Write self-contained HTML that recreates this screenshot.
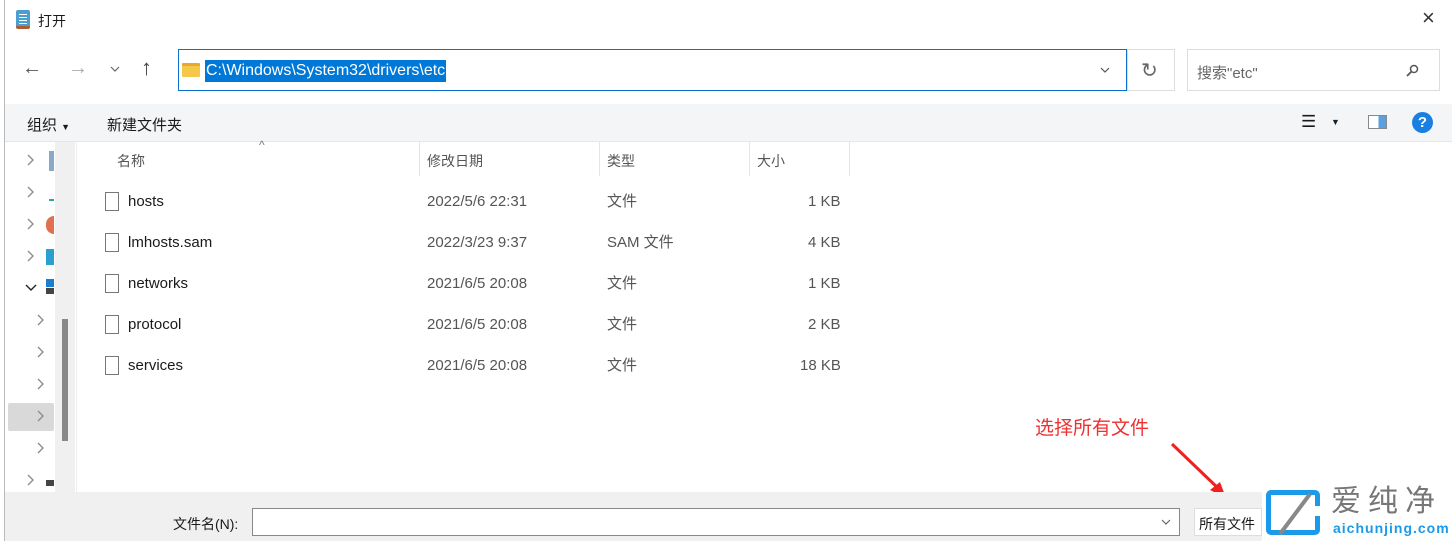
<!DOCTYPE html>
<html><head><meta charset="utf-8"><style>
*{margin:0;padding:0;box-sizing:border-box}
body{width:1452px;height:541px;overflow:hidden;background:#fff;font-family:"Liberation Sans","Noto Sans CJK SC",sans-serif;font-size:14px;color:#1a1a1a;position:relative}
.a{position:absolute}
.row span{position:absolute;font-size:15px;top:0;line-height:20px;height:20px}
.chev{width:8px;height:12px}
</style></head><body>
<div class="a" style="left:4px;top:0;width:1px;height:541px;background:#bbb"></div>
<!-- title -->
<div class="a" style="left:16px;top:10px;width:14px;height:19px;background:#4a9fd0;border-radius:2px;border-bottom:3px solid #b05a30"></div>
<div class="a" style="left:19px;top:14px;width:8px;height:1px;background:#fff;box-shadow:0 3px #fff,0 6px #fff,0 9px #fff"></div>
<div class="a" style="left:38px;top:11px;font-size:14px">打开</div>
<div class="a" style="left:1422px;top:5px;font-size:22px;color:#333">×</div>
<!-- nav -->
<div class="a" style="left:22px;top:57px;font-size:20px;color:#555">←</div>
<div class="a" style="left:68px;top:57px;font-size:20px;color:#aaa">→</div>
<svg class="a" style="left:110px;top:66px" width="10" height="6"><polyline points="1,1 5,5 9,1" fill="none" stroke="#666" stroke-width="1.2"/></svg>
<div class="a" style="left:141px;top:55px;font-size:22px;color:#444">↑</div>
<div class="a" style="left:178px;top:49px;width:949px;height:42px;border:1px solid #0a6fd0"></div>
<div class="a" style="left:182px;top:63px;width:18px;height:14px;background:#f5c84c;border-top:3px solid #e8a82a;border-radius:1px"></div>
<div class="a" style="left:205px;top:60px;height:22px;line-height:22px;background:#0078d7;color:#fff;font-size:16px;padding:0 1px">C:\Windows\System32\drivers\etc</div>
<svg class="a" style="left:1100px;top:67px" width="10" height="6"><polyline points="1,1 5,5 9,1" fill="none" stroke="#555" stroke-width="1.2"/></svg>
<div class="a" style="left:1127px;top:49px;width:48px;height:42px;border:1px solid #ddd"></div>
<div class="a" style="left:1141px;top:58px;font-size:20px;color:#666">↻</div>
<div class="a" style="left:1187px;top:49px;width:253px;height:42px;border:1px solid #ddd"></div>
<div class="a" style="left:1197px;top:62px;font-size:15px;color:#666">搜索"etc"</div>
<svg class="a" style="left:1405px;top:64px" width="14" height="14"><circle cx="9" cy="5" r="3.5" fill="none" stroke="#555" stroke-width="1.5"/><line x1="6.5" y1="7.5" x2="2" y2="12" stroke="#555" stroke-width="1.8"/></svg>
<!-- toolbar -->
<div class="a" style="left:5px;top:104px;width:1447px;height:38px;background:#f4f5f6;border-bottom:1px solid #e6e6e6"></div>
<div class="a" style="left:27px;top:114px;font-size:15px">组织 <span style="font-size:9px">▼</span></div>
<div class="a" style="left:107px;top:114px;font-size:15px">新建文件夹</div>
<div class="a" style="left:1301px;top:112px;font-size:17px">☰</div>
<div class="a" style="left:1331px;top:117px;font-size:9px;color:#123">▼</div>
<div class="a" style="left:1368px;top:115px;width:19px;height:14px;border:1px solid #888;background:linear-gradient(90deg,#fff 55%,#5aa0e0 55%)"></div>
<div class="a" style="left:1412px;top:112px;width:21px;height:21px;border-radius:50%;background:#1a7fe0;color:#fff;text-align:center;font-size:15px;line-height:21px;font-weight:bold">?</div>
<!-- nav pane -->
<div class="a" style="left:55px;top:142px;width:20px;height:350px;background:#f0f0f0"></div>
<div class="a" style="left:62px;top:319px;width:6px;height:122px;background:#888"></div>
<div class="a" style="left:8px;top:403px;width:46px;height:28px;background:#d9d9d9;border-radius:2px"></div>
<svg class="a" style="left:0;top:142px" width="55" height="350">
<g fill="none" stroke="#888" stroke-width="1.3">
<polyline points="28,13 33,18 28,23"/><polyline points="28,45 33,50 28,55"/><polyline points="28,77 33,82 28,87"/><polyline points="28,109 33,114 28,119"/>
<polyline points="38,173 43,178 38,183"/><polyline points="38,205 43,210 38,215"/><polyline points="38,237 43,242 38,247"/><polyline points="38,269 43,274 38,279"/><polyline points="38,301 43,306 38,311"/><polyline points="28,333 33,338 28,343"/>
</g><polyline points="26,143 31,148 36,143" fill="none" stroke="#222" stroke-width="1.4"/></svg>
<div class="a" style="left:49px;top:151px;width:5px;height:20px;background:#8aa8c8"></div>
<div class="a" style="left:49px;top:189px;width:5px;height:12px;border-bottom:2px solid #2a9"></div>
<div class="a" style="left:46px;top:216px;width:8px;height:18px;background:#e07050;border-radius:9px 0 0 9px"></div>
<div class="a" style="left:46px;top:249px;width:8px;height:16px;background:#2aa0d0"></div>
<div class="a" style="left:46px;top:279px;width:8px;height:8px;background:#1a7fd0"></div>
<div class="a" style="left:46px;top:288px;width:8px;height:6px;background:#444"></div>
<div class="a" style="left:46px;top:480px;width:8px;height:6px;background:#444"></div>
<div class="a" style="left:76px;top:142px;width:1px;height:350px;background:#eee"></div>
<!-- headers -->
<div class="a" style="left:117px;top:151px;font-size:14px;color:#555">名称</div>
<div class="a" style="left:259px;top:138px;font-size:12px;color:#777">^</div>
<div class="a" style="left:419px;top:142px;width:1px;height:34px;background:#e5e5e5"></div>
<div class="a" style="left:427px;top:151px;font-size:14px;color:#555">修改日期</div>
<div class="a" style="left:599px;top:142px;width:1px;height:34px;background:#e5e5e5"></div>
<div class="a" style="left:607px;top:151px;font-size:14px;color:#555">类型</div>
<div class="a" style="left:749px;top:142px;width:1px;height:34px;background:#e5e5e5"></div>
<div class="a" style="left:757px;top:151px;font-size:14px;color:#555">大小</div>
<div class="a" style="left:849px;top:142px;width:1px;height:34px;background:#e5e5e5"></div>
<!-- rows -->
<div class="a row" style="left:0;top:192px;width:900px">
<span style="left:105px;width:14px;height:19px;border:1px solid #777;background:#fff"></span><span style="left:128px">hosts</span><span style="left:427px;color:#555">2022/5/6 22:31</span><span style="left:607px;color:#555">文件</span><span style="left:808px;color:#555">1 KB</span></div>
<div class="a row" style="left:0;top:233px;width:900px">
<span style="left:105px;width:14px;height:19px;border:1px solid #777;background:#fff"></span><span style="left:128px">lmhosts.sam</span><span style="left:427px;color:#555">2022/3/23 9:37</span><span style="left:607px;color:#555">SAM 文件</span><span style="left:808px;color:#555">4 KB</span></div>
<div class="a row" style="left:0;top:274px;width:900px">
<span style="left:105px;width:14px;height:19px;border:1px solid #777;background:#fff"></span><span style="left:128px">networks</span><span style="left:427px;color:#555">2021/6/5 20:08</span><span style="left:607px;color:#555">文件</span><span style="left:808px;color:#555">1 KB</span></div>
<div class="a row" style="left:0;top:315px;width:900px">
<span style="left:105px;width:14px;height:19px;border:1px solid #777;background:#fff"></span><span style="left:128px">protocol</span><span style="left:427px;color:#555">2021/6/5 20:08</span><span style="left:607px;color:#555">文件</span><span style="left:808px;color:#555">2 KB</span></div>
<div class="a row" style="left:0;top:356px;width:900px">
<span style="left:105px;width:14px;height:19px;border:1px solid #777;background:#fff"></span><span style="left:128px">services</span><span style="left:427px;color:#555">2021/6/5 20:08</span><span style="left:607px;color:#555">文件</span><span style="left:800px;color:#555">18 KB</span></div>
<div class="a" style="left:1035px;top:413px;font-size:19px;color:#f03030">选择所有文件</div>
<svg class="a" style="left:1168px;top:440px" width="64" height="62"><line x1="4" y1="4" x2="52" y2="50" stroke="#f02020" stroke-width="3"/><polygon points="58,58 42,50 52,42" fill="#f02020"/></svg>
<!-- bottom -->
<div class="a" style="left:5px;top:492px;width:1447px;height:49px;background:#f0f0f0"></div>
<div class="a" style="left:173px;top:514px;font-size:14px">文件名(N):</div>
<div class="a" style="left:252px;top:508px;width:928px;height:28px;background:#fff;border:1px solid #888"></div>
<svg class="a" style="left:1161px;top:519px" width="10" height="6"><polyline points="1,1 5,5 9,1" fill="none" stroke="#666" stroke-width="1.2"/></svg>
<div class="a" style="left:1194px;top:508px;width:68px;height:28px;background:#fff;border:1px solid #ddd;font-size:14px;padding:5px 4px">所有文件</div>
<!-- logo -->
<div class="a" style="left:1262px;top:487px;width:190px;height:54px;background:#fff"></div>
<div class="a" style="left:1266px;top:490px;width:54px;height:45px;border:5px solid #1a9ae8;border-radius:5px"></div>
<svg class="a" style="left:1266px;top:490px" width="56" height="46"><line x1="14" y1="44" x2="44" y2="4" stroke="#888" stroke-width="4"/><rect x="46" y="16" width="10" height="10" fill="#fff"/></svg>
<div class="a" style="left:1331px;top:484px;font-size:30px;line-height:36px;color:#777;letter-spacing:7px">爱纯净</div>
<div class="a" style="left:1333px;top:520px;font-size:14px;line-height:16px;color:#1a9ae8;font-weight:bold;letter-spacing:1px">aichunjing.com</div>
</body></html>
